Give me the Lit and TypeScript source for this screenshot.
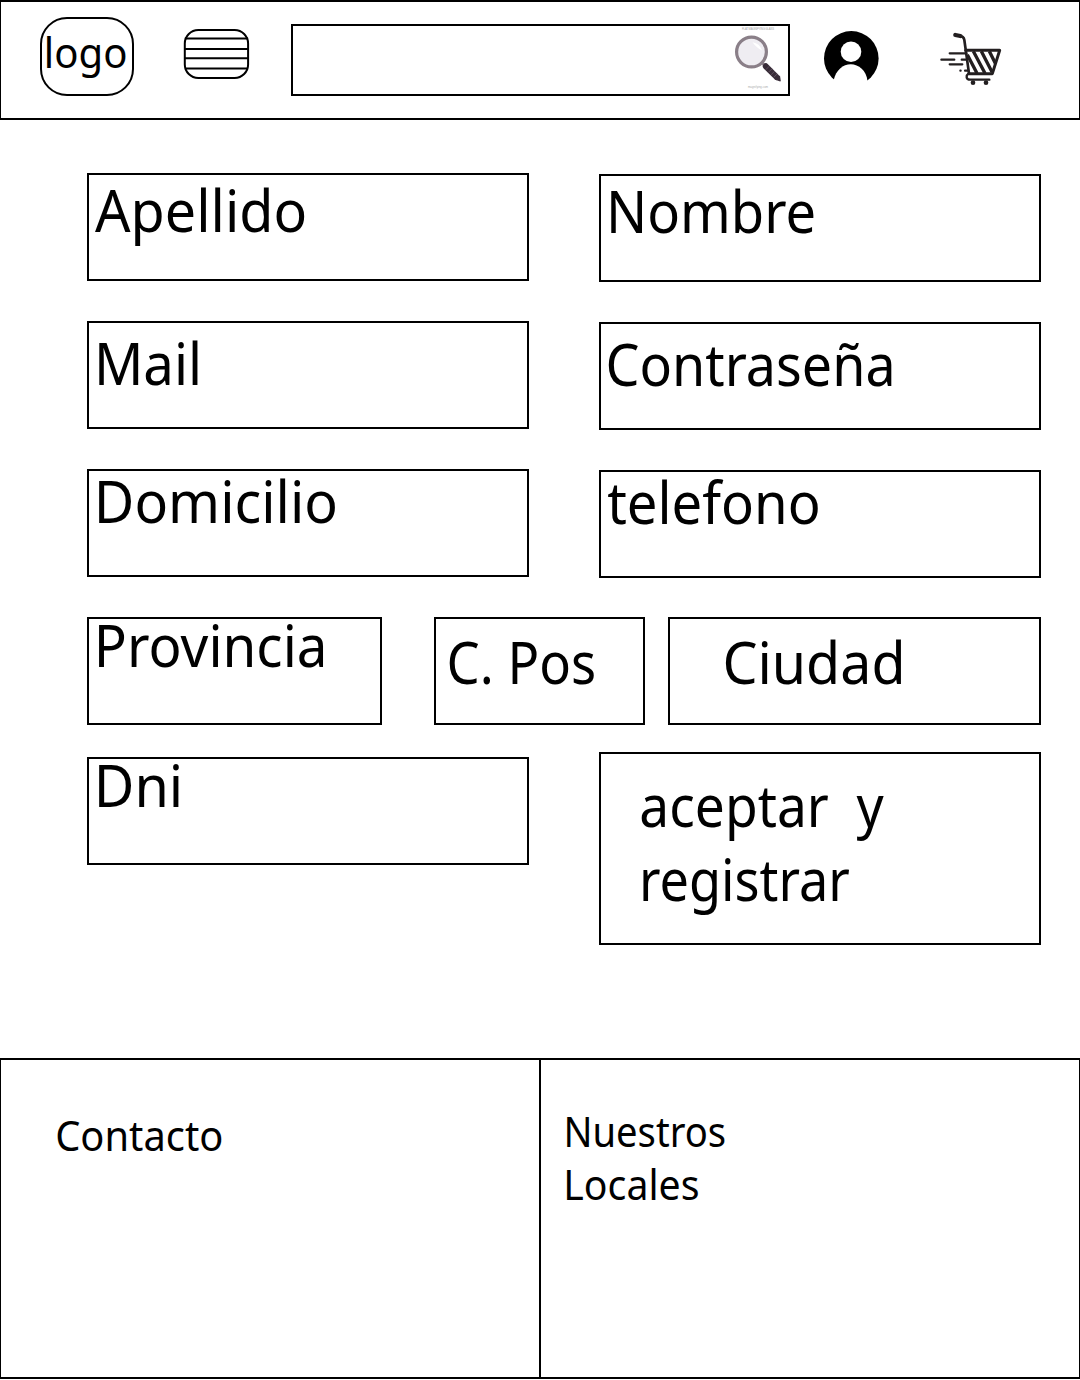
import { LitElement, html, css } from "lit";
import { customElement, property, state } from "lit/decorators.js";
import { styleMap } from "lit/directives/style-map.js";

const FAMILY = '"Noto Sans", "Open Sans", sans-serif';
const MEASURE = 1000;

/** One line of text whose drawn ink is fitted to a given width. */
@customElement("fit-label")
export class FitLabel extends LitElement {
  static styles = css`
    :host {
      display: block;
      height: 40px;
      line-height: 40px;
      font-family: "Noto Sans", "Open Sans", sans-serif;
      white-space: pre;
    }
    .text {
      display: inline-block;
      transform-origin: 0 0;
    }
  `;

  @property() text = "";
  @property({ type: Number }) size = 57.5;
  @property({ type: Number }) ink = 100;

  render() {
    const ctx = document.createElement("canvas").getContext("2d")!;
    ctx.font = `${MEASURE}px ${FAMILY}`;
    const m = ctx.measureText(this.text);
    const k = this.size / MEASURE;
    const left = -m.actualBoundingBoxLeft * k;
    const scale = this.ink / (m.actualBoundingBoxRight * k - left);
    const style = {
      fontSize: `${this.size}px`,
      transform: `translateX(${-left * scale}px) scaleX(${scale})`,
    };
    return html`<span class="text" style=${styleMap(style)}>${this.text}</span>`;
  }
}

@customElement("app-header")
export class AppHeader extends LitElement {
  static styles = css`
    :host {
      display: flex;
      align-items: flex-start;
      box-sizing: border-box;
      height: 120px;
      border: solid #000;
      border-width: 2px 1px;
    }
    svg {
      display: block;
      flex: none;
    }
    .logo {
      box-sizing: border-box;
      width: 94px;
      height: 79px;
      margin: 15px 0 0 39px;
      padding: 13px 0 0 5.3px;
      border: 2px solid #000;
      border-radius: 27px;
    }
    .menu {
      margin: 26px 0 0 49px;
    }
    .search {
      display: flex;
      justify-content: flex-end;
      box-sizing: border-box;
      width: 499px;
      height: 72px;
      margin: 22px 0 0 40.5px;
      border: 2px solid #000;
    }
    .user {
      margin: 28px 0 0 33.5px;
    }
    .cart {
      margin: 18px 0 0 49px;
    }
    .caption {
      font-family: "Liberation Sans", sans-serif;
      fill: #a5a5a5;
    }
  `;

  render() {
    return html`
      <div class="logo"><fit-label text="logo" .size=${42} .ink=${78.7}></fit-label></div>
      <svg class="menu" width="67" height="52" viewBox="183 28 67 52" fill="none" stroke="#000" stroke-width="2">
        <rect x="184.8" y="30" width="63.3" height="48" rx="13.5" />
        <path d="M184.8 38.5h63.3M184.8 49h63.3M184.8 58.2h63.3M184.8 68.5h63.3" />
      </svg>
      <div class="search">
        <svg width="57" height="68" viewBox="731 26 57 68">
          <text class="caption" x="742" y="30.3" font-size="2.8" textLength="32">FLAT MAGNIFYING GLASS</text>
          <circle cx="751.5" cy="52" r="14.9" fill="#efedf2" stroke="#8a7f88" stroke-width="3.2" />
          <path d="M752.5 42.2q7 1 9.6 8.2q-5.6-2.6-9.6-8.2z" fill="#fff" />
          <path d="M762.3 63l3 3" stroke="#8a7f88" stroke-width="3" />
          <path d="M765.8 66.3L776.5 77" stroke="#382c38" stroke-width="6" stroke-linecap="round" />
          <path d="M774.5 79.4l5.7 2.2.6-.6-.8-5.4z" fill="#382c38" />
          <path d="M769.3 66.2l-3.5 3.5M772 68.8l-3.5 3.5M774.6 71.3l-3.5 3.5M777.2 73.9l-3.5 3.5" stroke="#6b5d6b" stroke-width=".7" />
          <text class="caption" x="748" y="88.4" font-size="2.6" textLength="20">magnifying.com</text>
        </svg>
      </div>
      <svg class="user" width="58" height="58" viewBox="823 30 58 58">
        <circle cx="851.3" cy="58.4" r="27.3" fill="#000" />
        <circle cx="851" cy="51.7" r="10.3" fill="#fff" />
        <path d="M833.7 80C836 70 843 64.2 850.8 64.2S866.5 70.5 867.5 81V88H833.7z" fill="#fff" />
      </svg>
      <svg class="cart" width="80" height="80" viewBox="0 0 240 240" fill="none" stroke="#231f20" stroke-linecap="round" stroke-linejoin="round">
        <path d="M76 45L91 48" stroke-width="13" />
        <path d="M88 47Q101 49 103 60L117 160" stroke-width="8" />
        <path d="M107 91H209L187 161H117" stroke-width="9" />
        <path d="M112 104L141 160M130 94L165 160M154 94L186 156M178 94L197 132" stroke-width="10" stroke-linecap="butt" />
        <path d="M115 161Q109 165 110 172T121 179H178" stroke-width="7" />
        <circle cx="129" cy="188" r="7" fill="#231f20" stroke="none" />
        <circle cx="168" cy="188" r="7" fill="#231f20" stroke="none" />
        <path d="M59 100H109M34 119H73M95 119H109M59 133H97M91 152H92M105 152H114" stroke-width="6.5" />
      </svg>
    `;
  }
}

interface Field {
  text: string;
  ink: number;
  name: string;
}

@customElement("app-root")
export class AppRoot extends LitElement {
  static styles = css`
    :host {
      display: flex;
      flex-direction: column;
      box-sizing: border-box;
      width: 1080px;
      height: 1380px;
      background: #fff;
      color: #000;
      overflow: hidden;
    }
    .form {
      display: flex;
      flex-direction: column;
      gap: 39px;
      padding: 53px 39px 0 87px;
      height: 885px;
    }
    .row {
      display: flex;
      align-items: flex-start;
      justify-content: space-between;
      flex: none;
      height: 109px;
    }
    .last {
      margin-top: -13px;
      height: 193px;
    }
    .field,
    .submit {
      box-sizing: border-box;
      width: 442px;
      height: 108px;
      border: 2px solid #000;
    }
    .right {
      margin-top: 1px;
    }
    .apellido { padding: 15px 0 0 6.2px; }
    .nombre { padding: 15px 0 0 10px; }
    .mail { padding: 20px 0 0 9.6px; }
    .contrasena { padding: 20px 0 0 7.3px; }
    .domicilio { padding: 10px 0 0 9.8px; }
    .telefono { padding: 10px 0 0 6.5px; }
    .provincia { width: 295px; padding: 6px 0 0 9.8px; }
    .postal { width: 211px; margin-left: 52px; padding: 23px 0 0 13.3px; }
    .ciudad { width: 373px; margin-left: 23px; padding: 23px 0 0 54.5px; }
    .dni { margin-top: 5px; padding: 6px 0 0 9.8px; }
    .submit {
      display: flex;
      flex-direction: column;
      gap: 34px;
      height: 193px;
      padding: 31px 0 0 40px;
    }
    .indent { padding-left: 2.3px; }
    .footer {
      display: flex;
      box-sizing: border-box;
      height: 321px;
      border: solid #000;
      border-width: 2px 1px;
    }
    .contact {
      box-sizing: border-box;
      width: 540px;
      border-right: 2px solid #000;
      padding: 55px 0 0 56px;
    }
    .stores {
      display: flex;
      flex-direction: column;
      gap: 13px;
      padding: 51px 0 0 26.4px;
    }
  `;

  @state() private rows: Field[][] = [
    [
      { text: "Apellido", ink: 209.8, name: "apellido" },
      { text: "Nombre", ink: 202.5, name: "nombre right" },
    ],
    [
      { text: "Mail", ink: 99.2, name: "mail" },
      { text: "Contraseña", ink: 283.5, name: "contrasena right" },
    ],
    [
      { text: "Domicilio", ink: 236.6, name: "domicilio" },
      { text: "telefono", ink: 210.3, name: "telefono right" },
    ],
    [
      { text: "Provincia", ink: 224.3, name: "provincia" },
      { text: "C. Pos", ink: 145, name: "postal" },
      { text: "Ciudad", ink: 175.9, name: "ciudad" },
    ],
  ];

  private field(f: Field) {
    return html`<div class="field ${f.name}"><fit-label .text=${f.text} .ink=${f.ink}></fit-label></div>`;
  }

  render() {
    return html`
      <app-header></app-header>
      <main class="form">
        ${this.rows.map((r) => html`<div class="row">${r.map((f) => this.field(f))}</div>`)}
        <div class="row last">
          ${this.field({ text: "Dni", ink: 80.3, name: "dni" })}
          <div class="submit">
            <fit-label .text=${"aceptar  y"} .ink=${243}></fit-label>
            <fit-label class="indent" .text=${"registrar"} .ink=${206.5}></fit-label>
          </div>
        </div>
      </main>
      <footer class="footer">
        <div class="contact"><fit-label text="Contacto" .size=${42} .ink=${164.7}></fit-label></div>
        <div class="stores">
          <fit-label text="Nuestros" .size=${42} .ink=${157.5}></fit-label>
          <fit-label text="Locales" .size=${42} .ink=${130.8}></fit-label>
        </div>
      </footer>
    `;
  }
}
